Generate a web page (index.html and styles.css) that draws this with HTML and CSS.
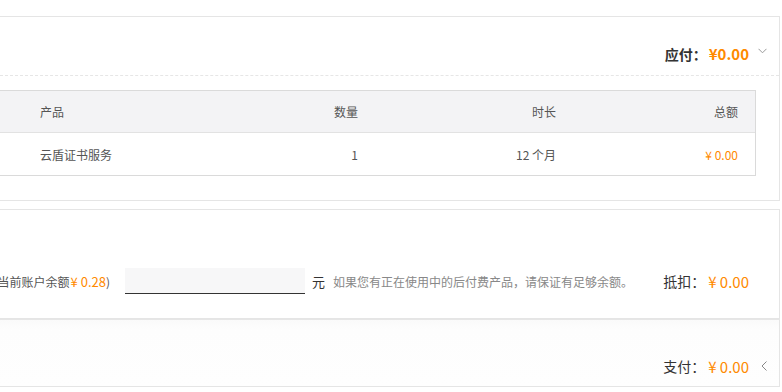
FILE: index.html
```html
<!doctype html>
<html lang="zh-CN">
<head>
	<meta charset="UTF-8" />
	<title>确认订单</title>
	<link rel="stylesheet" href="styles.css">
</head>
<body>
    <div id="order">
        <div class="panel panel_bill">
            <div class="sum_row">
                <span class="label bold">应付：</span>
                <span class="price bold big">¥0.00</span>
                <span class="icon">
                    <svg width="9" height="6" viewBox="0 0 9 6"><path d="M0.5 0.8 L4.5 4.8 L8.5 0.8" fill="none" stroke="#999" stroke-width="1"/></svg>
                </span>
            </div>
            <div class="goods">
                <div class="goods_row head">
                    <span>产品</span>
                    <span class="r">数量</span>
                    <span class="r">时长</span>
                    <span class="r">总额</span>
                </div>
                <div class="goods_row">
                    <span>云盾证书服务</span>
                    <span class="r">1</span>
                    <span class="r">12 个月</span>
                    <span class="r price">¥ 0.00</span>
                </div>
            </div>
        </div>

        <div class="panel panel_balance">
            <div class="balance_row">
                <div class="balance_tip"><span>使用账户余额抵扣（当前账户余额<em class="price">¥ 0.28</em>)</span></div>
                <input type="text" class="balance_input">
                <span class="unit">元</span>
                <span class="hint">如果您有正在使用中的后付费产品，请保证有足够余额。</span>
                <span class="label">抵扣：</span>
                <span class="price mid">¥ 0.00</span>
                <span class="icon"></span>
            </div>
        </div>

        <div class="panel panel_pay">
            <div class="sum_row">
                <span class="label">支付：</span>
                <span class="price mid">¥ 0.00</span>
                <span class="icon">
                    <svg width="6" height="10" viewBox="0 0 6 10"><path d="M5.5 0.5 L1 5 L5.5 9.5" fill="none" stroke="#888" stroke-width="1"/></svg>
                </span>
            </div>
        </div>
    </div>
</body>
</html>
```

FILE: styles.css
```css
* { margin: 0; padding: 0; box-sizing: border-box; }
html, body { width: 100%; background: #fff; overflow: hidden; }
body { font-family: "Noto Sans CJK SC", "Noto Sans", sans-serif; font-size: 12px; color: #333; }
em { font-style: normal; }

#order { width: 780px; padding-top: 16px; }

.panel { border: 1px solid #e5e5e5; border-left: none; background: #fff; }
.panel_bill { padding-bottom: 24px; }
.panel_balance { margin-top: 8px; padding: 58px 0 24px; }
.panel_pay { border-top-color: #e6e6e6; background: linear-gradient(#fafafa, #fdfdfd 9px, #fefefe); height: 68px; }

.sum_row { display: flex; justify-content: flex-end; align-items: center; height: 20px; padding-right: 12px; }
.panel_bill .sum_row { height: 59px; padding-top: 15px; border-bottom: 1px dashed #e6e6e6; }
.panel_pay .sum_row { height: 66px; padding-top: 26px; }

.label { font-size: 14px; color: #333; }
.bold { font-weight: bold; }
.price { color: #ff8a00; }
.price.big { font-size: 15px; margin-left: 2px; }
.price.mid { font-size: 15px; margin-left: 3px; }
.icon { width: 18px; display: flex; justify-content: flex-end; align-items: center; }
.panel_bill .icon { padding-bottom: 6px; }

.goods { width: 756px; margin-top: 14px; border: 1px solid #dadada; border-left: none; }
.goods_row { display: grid; grid-template-columns: 1fr 100px 198px 182px; align-items: center; height: 42px; padding: 0 17px 0 40px; color: #555; }
.goods_row.head { background: #f3f3f5; border-bottom: 1px solid #e2e2e2; color: #555; }
.goods_row .r { text-align: right; }

.balance_row { display: flex; align-items: center; height: 26px; padding-right: 12px; }
.balance_tip { width: 110px; display: flex; justify-content: flex-end; overflow: hidden; white-space: nowrap; color: #555; }
.balance_tip .price { font-size: 13px; margin-left: 1px; }
.balance_input { width: 180px; height: 26px; margin-left: 15px; border: none; border-bottom: 1px solid #333; background: #f7f7f8; outline: none; }
.unit { margin-left: 7px; font-size: 13px; color: #333; }
.hint { margin-left: 8px; flex: 1; color: #888; }
```
